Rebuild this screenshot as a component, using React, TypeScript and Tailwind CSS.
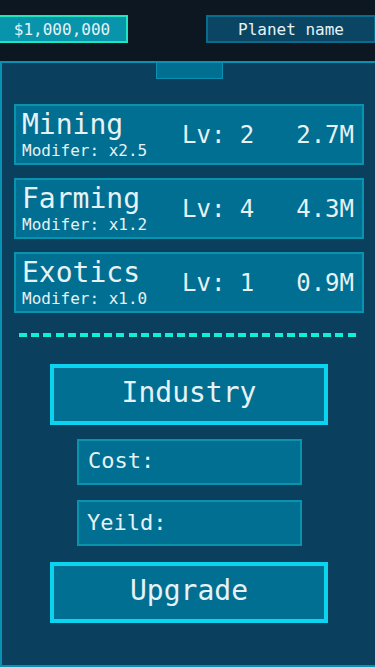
import React from "react";

const font = { fontFamily: '"DejaVu Sans Mono", "Liberation Mono", monospace' };

const rows = [
  { name: "Mining", mod: "x2.5", lv: 2, val: "2.7M" },
  { name: "Farming", mod: "x1.2", lv: 4, val: "4.3M" },
  { name: "Exotics", mod: "x1.0", lv: 1, val: "0.9M" },
];

const dashes = Array.from({ length: 28 }, (_, i) => i);

export default function App() {
  return (
    <div
      className="w-[375px] h-[667px] overflow-hidden bg-[#0d1722] text-[#e6f2f6]"
      style={font}
    >
      <div className="flex justify-between pt-[15px]">
        <div className="ml-[-4px] flex h-[28px] w-[132px] items-center justify-center border-2 border-[#1ee6c0] bg-[#0894ab] pt-[2px] text-[16px] leading-none">
          $1,000,000
        </div>
        <div className="mr-[-1px] flex h-[28px] w-[170px] items-center justify-center border-2 border-[#0a6c8c] bg-[#0a4563] pt-[2px] text-[16px] leading-none">
          Planet name
        </div>
      </div>

      <div className="mt-[18px] h-[606px] w-[378px] border-2 border-[#0891b2] bg-[#0a3f5d]">
        <div className="flex justify-center">
          <div className="h-[16px] w-[67px] border border-t-0 border-[#0891b2] bg-[#006f91]" />
        </div>

        <div className="mt-[25px] flex flex-col gap-[13px] px-[12px]">
          {rows.map((r) => (
            <div
              key={r.name}
              className="flex h-[61px] items-center border-2 border-[#0894ae] bg-[#006f91] pl-[6px] pr-[8px]"
            >
              <div className="flex w-[160px] shrink-0 flex-col self-start pt-[5px]">
                <div className="h-[28px] text-[28px] leading-[28px]">{r.name}</div>
                <div className="mt-[4px] h-[16px] text-[16px] leading-[16px]">
                  Modifer: {r.mod}
                </div>
              </div>
              <div className="text-[24px] leading-[24px]">Lv: {r.lv}</div>
              <div className="ml-auto text-[24px] leading-[24px]">{r.val}</div>
            </div>
          ))}
        </div>

        <div className="ml-[17px] mt-[20px] flex h-[4px] w-[337px] justify-between">
          {dashes.map((i) => (
            <div key={i} className="h-[4px] w-[8px] bg-[#12f0d3]" />
          ))}
        </div>

        <div className="mx-auto mt-[27px] flex h-[61px] w-[278px] items-center justify-center border-4 border-[#0bd4f0] bg-[#006f91] pb-[3px] text-[28px] leading-[28px]">
          Industry
        </div>

        <div className="ml-[75px] mt-[14px] flex h-[46px] w-[225px] items-center border-2 border-[#0894ae] bg-[#006f91] pb-[3px] pl-[9px] text-[22px] leading-[22px]">
          Cost:
        </div>

        <div className="ml-[75px] mt-[15px] flex h-[46px] w-[225px] items-center border-2 border-[#0894ae] bg-[#006f91] pl-[8px] text-[22px] leading-[22px]">
          Yeild:
        </div>

        <div className="mx-auto mt-[16px] flex h-[61px] w-[278px] items-center justify-center border-4 border-[#0bd4f0] bg-[#006f91] pb-[3px] text-[28px] leading-[28px]">
          Upgrade
        </div>
      </div>
    </div>
  );
}
